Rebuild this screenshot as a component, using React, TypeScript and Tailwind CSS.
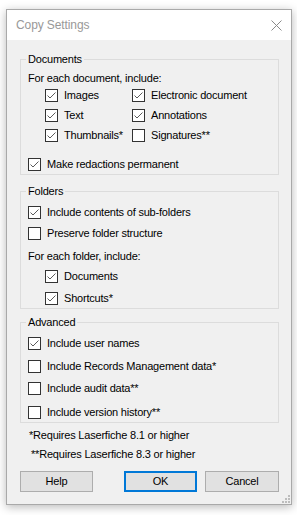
import React from "react";

type Item = { label: string; checked: boolean };

function CheckBox({ checked }: { checked: boolean }) {
  return (
    <span className="w-[13px] h-[13px] shrink-0 border border-[#333333] bg-white flex items-center justify-center">
      {checked && (
        <svg width="11" height="11" viewBox="0 0 11 11">
          <path d="M1.5 5.5 L4 8 L9.5 2.5" fill="none" stroke="#5a5a5a" strokeWidth="1" />
        </svg>
      )}
    </span>
  );
}

function Row({ item, className = "" }: { item: Item; className?: string }) {
  return (
    <div className={`flex items-center h-[20px] gap-[6px] ${className}`}>
      <CheckBox checked={item.checked} />
      <span className="whitespace-nowrap">{item.label}</span>
    </div>
  );
}

const docItems: Item[] = [
  { label: "Images", checked: true },
  { label: "Electronic document", checked: true },
  { label: "Text", checked: true },
  { label: "Annotations", checked: true },
  { label: "Thumbnails*", checked: true },
  { label: "Signatures**", checked: false },
];

export default function App() {
  return (
    <div className="w-[297px] h-[515px] bg-white pt-[9px] pl-[6px] font-['Liberation_Sans',Arial,sans-serif] text-[11px] tracking-[-0.2px] text-black">
      <div className="relative w-[286px] border border-[#a9a9a9] bg-[#f0f0f0] shadow-[0_2px_9px_rgba(0,0,0,0.28)]">
        {/* title bar */}
        <div className="h-[30px] bg-white flex items-center justify-between pl-[9px] pr-[9px]">
          <span className="text-[12px] tracking-[-0.1px] text-[#999999]">Copy Settings</span>
          <svg width="11" height="11" viewBox="0 0 11 11">
            <path d="M0.5 0.5 L10.5 10.5 M10.5 0.5 L0.5 10.5" stroke="#8a8a8a" strokeWidth="1" />
          </svg>
        </div>

        <div className="pl-[13px] pr-[12px] pt-[12px] pb-[12px]">
          {/* Documents */}
          <fieldset className="border border-[#dcdcdc] pl-[5px]">
            <legend className="px-[2px] leading-[14px]">Documents</legend>
            <div className="pl-[2px]">
              <div className="mt-[5px] h-[14px] leading-[14px]">For each document, include:</div>
              <div className="ml-[17px] grid grid-cols-[87px_1fr]">
                {docItems.map((it) => (
                  <Row key={it.label} item={it} />
                ))}
              </div>
              <Row className="mt-[9px]" item={{ label: "Make redactions permanent", checked: true }} />
            </div>
          </fieldset>

          {/* Folders */}
          <fieldset className="mt-[9px] border border-[#dcdcdc] pl-[5px]">
            <legend className="px-[2px] leading-[14px]">Folders</legend>
            <div className="pl-[2px]">
              <Row className="mt-[4px]" item={{ label: "Include contents of sub-folders", checked: true }} />
              <Row className="mt-[1px]" item={{ label: "Preserve folder structure", checked: false }} />
              <div className="mt-[6px] h-[14px] leading-[14px]">For each folder, include:</div>
              <Row className="mt-[3px] ml-[17px]" item={{ label: "Documents", checked: true }} />
              <Row className="mt-[2px] ml-[17px]" item={{ label: "Shortcuts*", checked: true }} />
            </div>
          </fieldset>

          {/* Advanced */}
          <fieldset className="mt-[6px] border border-[#dcdcdc] pl-[5px]">
            <legend className="px-[2px] leading-[14px]">Advanced</legend>
            <div className="pl-[2px]">
              <Row className="mt-[4px]" item={{ label: "Include user names", checked: true }} />
              <Row className="mt-[3px]" item={{ label: "Include Records Management data*", checked: false }} />
              <Row className="mt-[2px]" item={{ label: "Include audit data**", checked: false }} />
              <Row className="mt-[4px]" item={{ label: "Include version history**", checked: false }} />
            </div>
          </fieldset>

          <div className="mt-[5px] ml-[9px] h-[14px] leading-[14px]">*Requires Laserfiche 8.1 or higher</div>
          <div className="mt-[5px] ml-[11px] h-[14px] leading-[14px]">**Requires Laserfiche 8.3 or higher</div>

          <div className="mt-[10px] flex items-center">
            <button className="w-[73px] h-[21px] bg-[#e1e1e1] border border-[#adadad]">Help</button>
            <div className="flex-1" />
            <button className="w-[73px] h-[21px] bg-[#e1e1e1] border-2 border-[#0078d7]">OK</button>
            <button className="ml-[8px] w-[74px] h-[21px] bg-[#e1e1e1] border border-[#adadad]">Cancel</button>
          </div>
        </div>

        {/* resize grip */}
        <svg className="absolute right-[1px] bottom-[1px]" width="9" height="9" viewBox="0 0 9 9">
          <rect x="7" y="1" width="2" height="2" fill="#bdbdbd" />
          <rect x="4" y="4" width="2" height="2" fill="#bdbdbd" />
          <rect x="7" y="4" width="2" height="2" fill="#bdbdbd" />
          <rect x="1" y="7" width="2" height="2" fill="#bdbdbd" />
          <rect x="4" y="7" width="2" height="2" fill="#bdbdbd" />
          <rect x="7" y="7" width="2" height="2" fill="#bdbdbd" />
        </svg>
      </div>
    </div>
  );
}
